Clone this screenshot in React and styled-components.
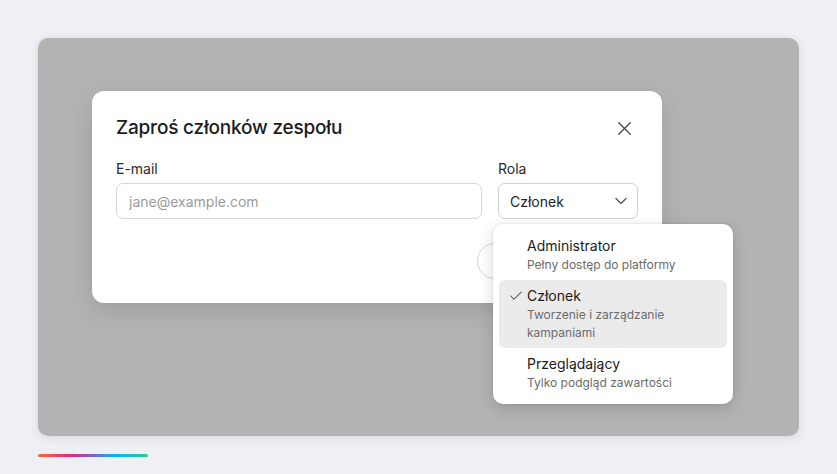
import React from "react";
import styled, { createGlobalStyle } from "styled-components";
import { X, ChevronDown, Check } from "lucide-react";

const Global = createGlobalStyle`
  html, body {
    margin: 0;
    padding: 0;
    background: #eff0f4;
    font-family: Inter, "Noto Sans", sans-serif;
    color: #1f1f1f;
  }
  * { box-sizing: border-box; }
`;

const Page = styled.div`
  width: 837px;
  height: 474px;
  padding: 38px 38px 0;
  display: flex;
  flex-direction: column;
  gap: 18px;
`;

const Frame = styled.div`
  height: 398px;
  border-radius: 10px;
  background: #b3b3b3;
  box-shadow: 0 2px 10px rgba(40, 50, 80, 0.12);
  padding: 53px 54px;
`;

const Brand = styled.div`
  width: 110px;
  height: 3px;
  border-radius: 2px;
  background: linear-gradient(90deg, #ff6a3d 0%, #e8237d 30%, #7a63c9 50%, #00b8ff 70%, #2ecc8a 100%);
`;

const Modal = styled.div`
  width: 570px;
  background: #fff;
  border-radius: 12px;
  padding: 24px;
  box-shadow: 0 8px 24px rgba(0, 0, 0, 0.12);
`;

const Header = styled.div`
  display: flex;
  align-items: center;
  justify-content: space-between;
  height: 26px;
`;

const Title = styled.h2`
  margin: 0;
  font-size: 19px;
  font-weight: 500;
  line-height: 26px;
  letter-spacing: -0.2px;
  color: #1c1c1c;
`;

const Close = styled.button`
  border: 0;
  background: none;
  padding: 0;
  margin-right: 2px;
  display: flex;
  color: #505050;
`;

const Fields = styled.div`
  display: grid;
  grid-template-columns: 1fr 140px;
  gap: 16px;
  margin-top: 18px;
`;

const Field = styled.div`
  display: flex;
  flex-direction: column;
  gap: 4px;
  position: relative;
`;

const Label = styled.label`
  font-size: 14px;
  line-height: 20px;
  color: #2a2a2a;
`;

const Input = styled.input`
  height: 36px;
  border: 1px solid #d6d6d6;
  border-radius: 7px;
  padding: 0 12px;
  font: inherit;
  font-size: 14px;
  outline: none;
  &::placeholder { color: #9c9c9c; }
`;

const Select = styled.div`
  height: 36px;
  border: 1px solid #d0d0d0;
  border-radius: 7px;
  padding: 0 6px 0 11px;
  display: flex;
  align-items: center;
  justify-content: space-between;
  font-size: 14px;
  color: #222;
`;

const Footer = styled.div`
  display: flex;
  justify-content: flex-end;
  gap: 10px;
  margin-top: 24px;
`;

const Button = styled.button`
  height: 36px;
  border-radius: 18px;
  padding: 0 15px;
  font: inherit;
  font-size: 14px;
  border: 1px solid ${(p) => (p.$primary ? "#1c1c1c" : "#d6d6d6")};
  background: ${(p) => (p.$primary ? "#1c1c1c" : "#fff")};
  color: ${(p) => (p.$primary ? "#fff" : "#222")};
`;

const Menu = styled.div`
  position: absolute;
  top: 65px;
  left: -5px;
  width: 240px;
  background: #fff;
  border-radius: 10px;
  padding: 6px;
  box-shadow: 0 4px 16px rgba(0, 0, 0, 0.16), 0 0 0 1px rgba(0, 0, 0, 0.04);
  z-index: 2;
`;

const Item = styled.div`
  position: relative;
  padding: 6px 16px 6px 28px;
  border-radius: 6px;
  background: ${(p) => (p.$active ? "#ebebeb" : "transparent")};
`;

const Tick = styled.span`
  position: absolute;
  left: 9px;
  top: 8px;
  display: flex;
  color: #222;
`;

const ItemTitle = styled.div`
  font-size: 14px;
  line-height: 20px;
  color: #1a1a1a;
`;

const ItemDesc = styled.div`
  font-size: 12px;
  line-height: 18px;
  color: #6b6b6b;
`;

const roles = [
  { name: "Administrator", desc: "Pełny dostęp do platformy" },
  { name: "Członek", desc: "Tworzenie i zarządzanie kampaniami", active: true },
  { name: "Przeglądający", desc: "Tylko podgląd zawartości" },
];

export default function App() {
  return (
    <>
      <Global />
      <Page>
        <Frame>
          <Modal>
            <Header>
              <Title>Zaproś członków zespołu</Title>
              <Close aria-label="Zamknij">
                <X size={23} strokeWidth={1.4} />
              </Close>
            </Header>
            <Fields>
              <Field>
                <Label>E-mail</Label>
                <Input placeholder="jane@example.com" />
              </Field>
              <Field>
                <Label>Rola</Label>
                <Select>
                  Członek
                  <ChevronDown size={20} strokeWidth={1.5} color="#555" />
                </Select>
                <Menu>
                  {roles.map((r) => (
                    <Item key={r.name} $active={r.active}>
                      {r.active && (
                        <Tick>
                          <Check size={16} strokeWidth={1.5} />
                        </Tick>
                      )}
                      <ItemTitle>{r.name}</ItemTitle>
                      <ItemDesc>{r.desc}</ItemDesc>
                    </Item>
                  ))}
                </Menu>
              </Field>
            </Fields>
            <Footer>
              <Button>Anuluj</Button>
              <Button $primary>Zaproś</Button>
            </Footer>
          </Modal>
        </Frame>
        <Brand />
      </Page>
    </>
  );
}
